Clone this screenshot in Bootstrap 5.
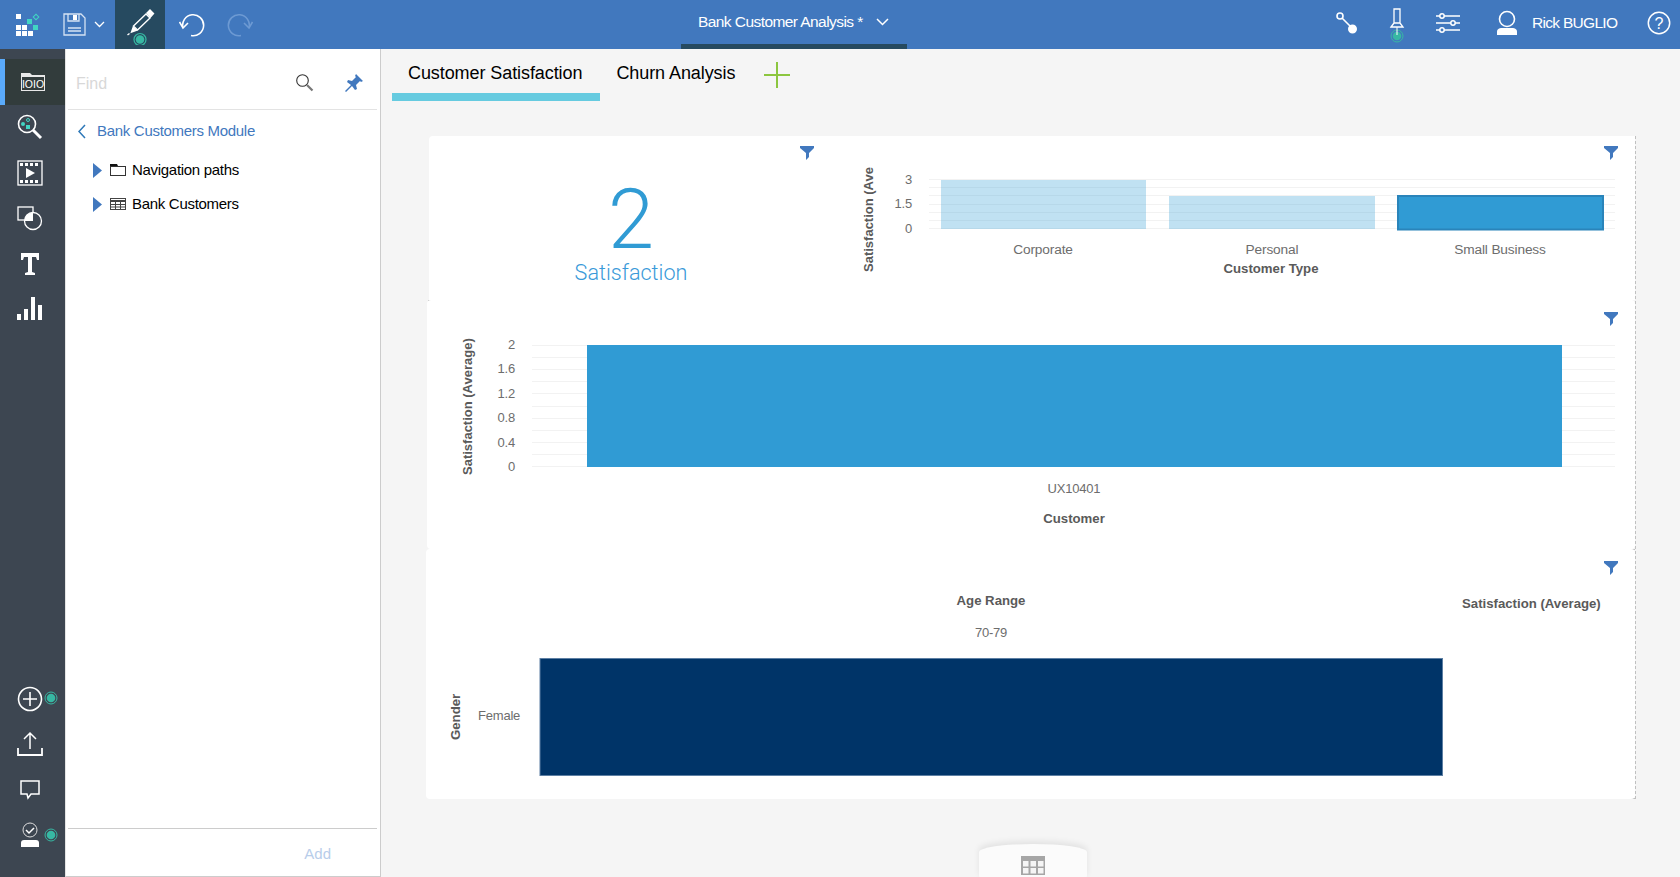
<!DOCTYPE html>
<html lang="en"><head><meta charset="utf-8"><title>Bank Customer Analysis</title>
<link href="https://cdn.jsdelivr.net/npm/bootstrap@5.3.0/dist/css/bootstrap.min.css" rel="stylesheet">
<style>
html,body{height:877px;overflow:hidden}
body{font-family:"Liberation Sans",Arial,sans-serif;background:#f5f5f5;color:#000}
svg{display:block}
.topbar{height:49px;background:#4178be;color:#fff}
.top-left{width:681px}
.tb-logo{margin-left:14px;margin-right:23px}
.tb-edit{width:50px;height:49px;background:#264a60;margin-left:10px}
.tb-title{width:226px;height:49px;border-bottom:5px solid #264a60;font-size:15.5px;letter-spacing:-.57px;padding-left:17px;padding-top:0;gap:13px}
.tb-user{font-size:15.5px;letter-spacing:-.7px;margin:0 30px 0 14px}
.shell{height:828px}
.rail{width:65px;background:#3d4651;padding-top:10px;padding-bottom:19px}
.rail-item{height:45.5px;width:60px;margin-left:0}
.rail-item.on{background:#323c3c;border-left:5px solid #5aaafa;width:65px;margin-left:0}
.rail-item.on svg{margin-left:-5px}
.rail-dot{position:absolute;left:44px;top:15px}
.side{width:316px;background:#fff;border-right:1px solid #ccc;border-bottom:1px solid #ccc;border-left:1px solid #e4e4e4;padding:0 3px 0 2px}
.find-row{height:61px;border-bottom:1px solid #e3e3e3;padding-right:13px}
.find-in{border:0;background:none;padding:9px 0 0 8px;font-size:16px;width:200px;box-shadow:none!important}
.find-in::placeholder{color:#d8d8d8}
.find-tools{gap:30px;padding-top:7px}
.back-lnk{font-size:15px;letter-spacing:-.3px;color:#4178be;margin:12px 0 0 10px;height:18px;gap:7px;text-decoration:none}
.tree-gap{height:13px}
.tree-row{height:34px;font-size:15px;letter-spacing:-.3px;padding-left:25px;color:#000}
.tree-lbl{margin-left:6px}
.side-foot{height:48px;border-top:1px solid #ccc;padding:4px 46px 0 0;font-size:15px;color:#b8cdea}
.stage{min-width:0}
.tabbar{height:52px;margin-left:11px}
.tab-lnk{display:block;height:52px;padding:11px 16px 0;color:#000;font-size:18px;letter-spacing:-.08px;text-decoration:none;white-space:nowrap}
.tab-lnk.on{border-bottom:8px solid #66cbe0;padding-right:18px}
.tab-plus{margin:12px 0 0 12px}
.dash{margin:35px 0 0 45px;width:1210px;border-right:1px dashed #c0c0c0;height:663px;position:relative}
.wgt{background:#fff;position:relative}
.wgt-kpi{width:400px;height:164px;margin-left:3px;border-radius:4px 0 0 0;padding-left:5px}
.wgt-col{width:807px;height:164px}
.wgt-mid{height:249px;margin-left:1px;border-radius:4px}
.wgt-low{height:250px;border-radius:4px}
.flt{position:absolute;right:17px;top:10px}
.wgt-mid .flt,.wgt-low .flt{top:12px}
.wgt-kpi .flt{right:14px}
.kpi-num{font-family:Roboto,sans-serif;font-weight:300;font-size:83px;line-height:76px;margin-top:46px;color:#309bd4}
.kpi-lbl{font-family:Roboto,"Liberation Sans",sans-serif;font-weight:300;font-size:21.6px;line-height:28px;margin-top:1px;color:#3a9ad9}
.tick{position:absolute;background:#c0c0c0;height:1px;width:4px}
.tick-a{left:402px;top:0}
.tick-b{left:402px;top:164px}
.tick-c{right:0;top:413px}
.tick-d{right:0;top:662px}
.tick-e{left:2px;top:164px}
.chart-txt{font-family:"Liberation Sans",Arial,sans-serif;font-size:13px;fill:#6d6d6d;letter-spacing:-.2px}
.chart-cat{font-size:13.7px;letter-spacing:-.15px}
.chart-ttl{font-family:"Liberation Sans",Arial,sans-serif;font-size:13.2px;font-weight:700;fill:#5a5a5a}
.chart-rot{font-size:13px}
.grid-ln{stroke:#f2f2f2;stroke-width:1}
.tbl-tab{position:absolute;left:979px;top:844px;width:108px;height:40px;background:#fbfbfb;border-radius:50%/8px;box-shadow:0 -3px 6px rgba(0,0,0,.08)}
.tbl-tab svg{margin:12px auto 0}
</style></head>
<body>
<header class="topbar d-flex align-items-start">
 <div class="top-left d-flex align-items-center">
  <svg class="tb-logo" width="26" height="24" viewBox="0 0 26 24"><g fill="#fff"><rect x="2" y="1" width="5" height="5"/><rect x="2" y="12" width="5" height="5"/><rect x="8" y="12" width="5" height="5"/><rect x="2" y="18" width="5" height="5"/><rect x="8" y="18" width="5" height="5"/><rect x="14" y="18" width="5" height="5"/></g><g fill="#41d6c3"><rect x="13" y="6" width="5" height="5"/><rect x="19" y="12" width="5" height="5"/></g><rect x="20" y="2" width="4" height="4" transform="rotate(45 22 4)" fill="none" stroke="#41d6c3"/></svg>
  <svg width="23" height="23" viewBox="0 0 23 23" fill="none" stroke="#d5e2f3" stroke-width="1.3"><path d="M1 1h17l4 4v17H1z"/><path d="M5 1v7h11V1" /><rect x="10" y="2" width="4" height="5" fill="#fff" stroke="none"/><path d="M5 15h13M5 18h13" stroke-width="1.5"/></svg>
  <svg class="ms-2" width="11" height="7" viewBox="0 0 11 7" fill="none" stroke="#fff" stroke-width="1.3"><path d="M1 1l4.500 4.500L10 1"/></svg>
  <div class="tb-edit d-flex align-items-center justify-content-center">
   <svg width="30" height="40" viewBox="0 0 30 40" fill="none" stroke="#fff" stroke-width="1.4"><path d="M8.500 21L21 9l4 4-12.500 12z"/><path d="M22 8l3-3 3.500 3.500-3 3.500z" fill="#fff"/><path d="M8.500 21.500l-2 5.500 5.500-2" fill="#fff"/><path d="M2.500 30l2-1.500"/><circle cx="15" cy="34.500" r="6" stroke="#37b8a3" stroke-width="1.200"/><circle cx="15" cy="34.500" r="4.300" fill="#37b8a3" stroke="none"/></svg>
  </div>
  <svg style="margin-left:14px" width="26" height="24" viewBox="0 0 26 24" fill="none" stroke="#fff" stroke-width="1.6"><path d="M4 15A10.500 10.500 0 1 1 12 22.500"/><path d="M0.500 9L4 15l5-5"/></svg>
  <svg style="margin-left:22px" width="26" height="24" viewBox="0 0 26 24" fill="none" stroke="#6d9ad3" stroke-width="1.6"><path d="M22 15A10.500 10.500 0 1 0 14 22.500"/><path d="M25.500 9L22 15l-5-5"/></svg>
 </div>
 <div class="tb-title d-flex align-items-center"><span>Bank Customer Analysis *</span>
  <svg width="13" height="8" viewBox="0 0 13 8" fill="none" stroke="#fff" stroke-width="1.500"><path d="M1 1l5.500 5.500L12 1"/></svg></div>
 <div class="flex-fill d-flex align-items-center" style="height:45px">
  <svg style="margin-left:429px" width="22" height="22" viewBox="0 0 22 22" fill="none" stroke="#fff" stroke-width="1.6"><circle cx="4" cy="4" r="3"/><path d="M6 6l9 9"/><circle cx="16.500" cy="17" r="3.700" fill="#fff"/></svg>
  <svg style="margin-left:31px;margin-top:4px" width="16" height="36" viewBox="0 0 16 36" fill="none" stroke="#fff" stroke-width="1.300"><path d="M5 2h6v14H5zM2 20l3-4h6l3 4z"/><circle cx="8" cy="29" r="6" stroke="#37b8a3" stroke-width="1"/><circle cx="8" cy="29" r="4.300" fill="#37b8a3" stroke="none"/><path d="M8 20v8" stroke-width="1"/></svg>
  <svg style="margin-left:30px" width="26" height="22" viewBox="0 0 26 22" fill="none" stroke="#fff" stroke-width="1.500"><path d="M1 4h24M1 11h24M1 18h24"/><circle cx="7" cy="4" r="2.200" fill="#4178be"/><circle cx="18" cy="11" r="2.200" fill="#4178be"/><circle cx="7" cy="18" r="2.200" fill="#4178be"/></svg>
  <svg style="margin-left:35px" width="22" height="26" viewBox="0 0 22 26"><circle cx="11" cy="9" r="7.500" fill="none" stroke="#fff" stroke-width="1.600"/><path d="M1 25v-3c0-3 2-4 5-4h10c3 0 5 1 5 4v3z" fill="#fff"/></svg>
  <span class="tb-user">Rick BUGLIO</span>
  <svg width="24" height="24" viewBox="0 0 24 24"><circle cx="12" cy="12" r="10.700" fill="none" stroke="#fff" stroke-width="1.500"/><text x="12" y="18" text-anchor="middle" font-family="Liberation Sans" font-size="16" fill="#fff">?</text></svg>
 </div>
</header>
<div class="shell d-flex">
 <nav class="rail d-flex flex-column justify-content-between flex-shrink-0">
  <div class="d-flex flex-column">
   <div class="rail-item on d-flex align-items-center justify-content-center">
    <svg width="26" height="20" viewBox="0 0 26 20"><path d="M1 1h9l2 2h13v16H1z" fill="#e8e8e8"/><rect x="2" y="5" width="22" height="13" fill="#323c3c"/><text x="13" y="15.500" text-anchor="middle" font-family="Liberation Sans" font-size="10.500" fill="#fff">IOIO</text></svg>
   </div>
   <div class="rail-item d-flex align-items-center justify-content-center">
    <svg width="26" height="26" viewBox="0 0 26 26" fill="none" stroke="#fff" stroke-width="1.600"><circle cx="10" cy="10" r="8.500"/><path d="M16 16l8 8" stroke-width="3"/><circle cx="6" cy="10" r="2" fill="#41d6c3" stroke="none"/><rect x="9" y="11" width="4" height="4" fill="#41d6c3" stroke="none"/><circle cx="11" cy="6" r="1.500" stroke="#41d6c3" stroke-width="1"/></svg>
   </div>
   <div class="rail-item d-flex align-items-center justify-content-center">
    <svg width="26" height="26" viewBox="0 0 26 26"><rect x="1" y="1" width="24" height="24" fill="none" stroke="#fff" stroke-width="1.300"/><path d="M3 3h3v3H3zM8 3h3v3H8zM13 3h3v3h-3zM18 3h3v3h-3zM3 20h3v3H3zM8 20h3v3H8zM13 20h3v3h-3zM18 20h3v3h-3z" fill="#fff"/><path d="M9 8l9 5-9 5z" fill="#fff"/></svg>
   </div>
   <div class="rail-item d-flex align-items-center justify-content-center">
    <svg width="26" height="26" viewBox="0 0 26 26" fill="none" stroke="#fff" stroke-width="1.300"><rect x="1" y="2" width="15" height="13"/><circle cx="16" cy="16" r="8.500" fill="#3d4651"/><path d="M16 7.500V16H7.600A8.500 8.500 0 0 1 16 7.500z" fill="#fff" stroke="none"/></svg>
   </div>
   <div class="rail-item d-flex align-items-center justify-content-center">
    <svg width="24" height="26" viewBox="0 0 24 26"><path d="M3 2h18v7h-2l-1-3h-4v15l3 1v2H7v-2l3-1V6H6L5 9H3z" fill="#fff"/></svg>
   </div>
   <div class="rail-item d-flex align-items-center justify-content-center">
    <svg width="26" height="26" viewBox="0 0 26 26" fill="#fff"><rect x="0" y="18" width="4" height="6"/><rect x="7" y="13" width="4" height="11"/><rect x="14" y="1" width="4" height="23"/><rect x="21" y="9" width="4" height="15"/></svg>
   </div>
  </div>
  <div class="d-flex flex-column">
   <div class="rail-item position-relative d-flex align-items-center justify-content-center">
    <svg width="26" height="26" viewBox="0 0 26 26" fill="none" stroke="#fff" stroke-width="1.600"><circle cx="13" cy="13" r="11.500"/><path d="M13 6v14M6 13h14"/></svg>
    <svg class="rail-dot" width="14" height="14" viewBox="0 0 14 14"><circle cx="7" cy="7" r="6" fill="none" stroke="#37b8a3"/><circle cx="7" cy="7" r="4.300" fill="#37b8a3"/></svg>
   </div>
   <div class="rail-item d-flex align-items-center justify-content-center">
    <svg width="26" height="26" viewBox="0 0 26 26" fill="none" stroke="#fff" stroke-width="1.500"><path d="M7 8l6-6 6 6M13 2v16"/><path d="M1 17v7h24v-7" stroke-width="1.800"/></svg>
   </div>
   <div class="rail-item d-flex align-items-center justify-content-center">
    <svg width="22" height="22" viewBox="0 0 22 22" fill="none" stroke="#fff" stroke-width="1.500"><path d="M2 2h18v13h-8l-3 4-1-4H2z"/></svg>
   </div>
   <div class="rail-item position-relative d-flex align-items-center justify-content-center">
    <svg width="22" height="26" viewBox="0 0 22 26"><circle cx="11" cy="8" r="7" fill="none" stroke="#ddd" stroke-width="1"/><path d="M7 8l3 3 5-5" fill="none" stroke="#fff" stroke-width="1.500"/><path d="M2 25v-4c0-2 1-3 3-3h12c2 0 3 1 3 3v4z" fill="#fff"/></svg>
    <svg class="rail-dot" width="14" height="14" viewBox="0 0 14 14"><circle cx="7" cy="7" r="6" fill="none" stroke="#37b8a3"/><circle cx="7" cy="7" r="4.300" fill="#37b8a3"/></svg>
   </div>
  </div>
 </nav>
 <aside class="side d-flex flex-column flex-shrink-0">
  <div class="find-row d-flex align-items-center justify-content-between">
   <input class="form-control find-in" placeholder="Find">
   <div class="find-tools d-flex align-items-center">
    <svg width="18" height="18" viewBox="0 0 18 18" fill="none" stroke="#333" stroke-width="1.100"><circle cx="6.500" cy="6.500" r="5.800"/><path d="M11 11l5.500 5.500" stroke-width="2.200" stroke="#777"/></svg>
    <svg width="20" height="20" viewBox="0 0 20 20" fill="#4178be"><path d="M12 1l7 7-2 1-1-1-4 4 1 4-2 1-3-4-6 6-1-1 6-6-4-3 1-2 4 1 4-4-1-1z"/></svg>
   </div>
  </div>
  <a class="back-lnk d-flex align-items-center" href="#"><svg width="8" height="15" viewBox="0 0 8 15" fill="none" stroke="#2e78b8" stroke-width="1.500"><path d="M7 1L1 7.500 7 14"/></svg><span class="ms-1">Bank Customers Module</span></a>
  <div class="tree-gap"></div>
  <div class="tree-row d-flex align-items-center">
   <svg width="9" height="15" viewBox="0 0 9 15"><path d="M0 0l9 7.500L0 15z" fill="#4178be"/></svg>
   <svg class="ms-2" width="16" height="12" viewBox="0 0 16 12"><path d="M0 0h7l1 2h8v1H0z" fill="#111"/><rect x=".5" y="2.500" width="15" height="9" fill="none" stroke="#333"/></svg>
   <span class="tree-lbl">Navigation paths</span></div>
  <div class="tree-row d-flex align-items-center">
   <svg width="9" height="15" viewBox="0 0 9 15"><path d="M0 0l9 7.500L0 15z" fill="#4178be"/></svg>
   <svg class="ms-2" width="16" height="12" viewBox="0 0 16 12" fill="none" stroke="#444"><rect x=".5" y=".5" width="15" height="11"/><path d="M0 3h16" stroke-width="2"/><path d="M0 6.500h16M0 9h16M5.500 3v8M10.500 3v8"/></svg>
   <span class="tree-lbl">Bank Customers</span></div>
  <div class="side-foot mt-auto d-flex align-items-center justify-content-end">Add</div>
 </aside>
 <main class="stage flex-fill">
  <div class="tabbar d-flex align-items-start">
   <a class="tab-lnk on" href="#">Customer Satisfaction</a>
   <a class="tab-lnk" href="#">Churn Analysis</a>
   <svg class="tab-plus" width="28" height="28" viewBox="0 0 28 28" stroke="#8cc63f" stroke-width="2"><path d="M14 1v26M1 14h26"/></svg>
  </div>
  <section class="dash">
   <i class="tick tick-a"></i><i class="tick tick-b"></i><i class="tick tick-c"></i><i class="tick tick-d"></i><i class="tick tick-e"></i>
   <div class="d-flex">
    <div class="wgt wgt-kpi d-flex flex-column align-items-center">
     <svg class="flt" width="14" height="14" viewBox="0 0 14 14" fill="#4178be"><path d="M0 0h14v2L9 7v4l-3 3V7L0 2z"/></svg>
     <div class="kpi-num">2</div><div class="kpi-lbl">Satisfaction</div>
    </div>
    <div class="wgt wgt-col">
     <svg class="flt" width="14" height="14" viewBox="0 0 14 14" fill="#4178be"><path d="M0 0h14v2L9 7v4l-3 3V7L0 2z"/></svg>
     <svg width="807" height="164" viewBox="828 136 807 164">
      <path class="grid-ln" d="M929 179.500h686M929 187.500h686M929 195.500h686M929 204.500h686M929 212.500h686M929 220.500h686M929 228.500h686"/>
      <rect x="941" y="180" width="205" height="49" fill="#309bd4" opacity=".3"/>
      <rect x="1169" y="196" width="206" height="33" fill="#309bd4" opacity=".3"/>
      <rect x="1398" y="196" width="205" height="33.500" fill="#309bd4" stroke="#2a84ba" stroke-width="2"/>
      <g class="chart-txt" text-anchor="end"><text x="912" y="184">3</text><text x="912" y="208">1.5</text><text x="912" y="233">0</text></g>
      <g class="chart-txt chart-cat" text-anchor="middle"><text x="1043" y="254">Corporate</text><text x="1272" y="254">Personal</text><text x="1500" y="254">Small Business</text></g>
      <text class="chart-ttl" x="1271" y="273" text-anchor="middle">Customer Type</text>
      <text class="chart-ttl chart-rot" transform="translate(873 272) rotate(-90)">Satisfaction (Ave</text>
     </svg>
    </div>
   </div>
   <div class="wgt wgt-mid">
    <svg class="flt" width="14" height="14" viewBox="0 0 14 14" fill="#4178be"><path d="M0 0h14v2L9 7v4l-3 3V7L0 2z"/></svg>
    <svg width="1209" height="249" viewBox="427 300 1209 249">
     <path class="grid-ln" d="M532 345.500h1083M532 357.500h1083M532 369.500h1083M532 381.500h1083M532 393.500h1083M532 406.500h1083M532 418.500h1083M532 430.500h1083M532 442.500h1083M532 454.500h1083M532 466.500h1083"/>
     <rect x="587" y="345" width="975" height="122" fill="#309bd4"/>
     <g class="chart-txt" text-anchor="end"><text x="515" y="349">2</text><text x="515" y="373">1.6</text><text x="515" y="398">1.2</text><text x="515" y="422">0.8</text><text x="515" y="447">0.4</text><text x="515" y="471">0</text></g>
     <text class="chart-txt" x="1074" y="493" text-anchor="middle">UX10401</text>
     <text class="chart-ttl" x="1074" y="523" text-anchor="middle">Customer</text>
     <text class="chart-ttl chart-rot" transform="translate(472 475) rotate(-90)">Satisfaction (Average)</text>
    </svg>
   </div>
   <div class="wgt wgt-low">
    <svg class="flt" width="14" height="14" viewBox="0 0 14 14" fill="#4178be"><path d="M0 0h14v2L9 7v4l-3 3V7L0 2z"/></svg>
    <svg width="1210" height="250" viewBox="426 549 1210 250">
     <text class="chart-ttl" x="991" y="605" text-anchor="middle">Age Range</text>
     <text class="chart-txt" x="991" y="637" text-anchor="middle">70-79</text>
     <text class="chart-ttl" x="1462" y="608">Satisfaction (Average)</text>
     <rect x="540" y="658.500" width="902.500" height="117" fill="#003468" stroke="#5d7fa3"/>
     <text class="chart-ttl" transform="translate(460 740) rotate(-90)">Gender</text>
     <text class="chart-txt" x="478" y="720">Female</text>
    </svg>
   </div>
  </section>
 </main>
</div>
<div class="tbl-tab"><svg width="24" height="19" viewBox="0 0 24 19"><rect width="24" height="19" fill="#a6a6a6"/><g fill="#f5f5f5"><rect x="2" y="5" width="5.500" height="5.500"/><rect x="9.500" y="5" width="5.500" height="5.500"/><rect x="17" y="5" width="5.500" height="5.500"/><rect x="2" y="12" width="5.500" height="5.500"/><rect x="9.500" y="12" width="5.500" height="5.500"/><rect x="17" y="12" width="5.500" height="5.500"/></g></svg></div>
<script src="https://cdn.jsdelivr.net/npm/bootstrap@5.3.0/dist/js/bootstrap.bundle.min.js"></script>
</body></html>
